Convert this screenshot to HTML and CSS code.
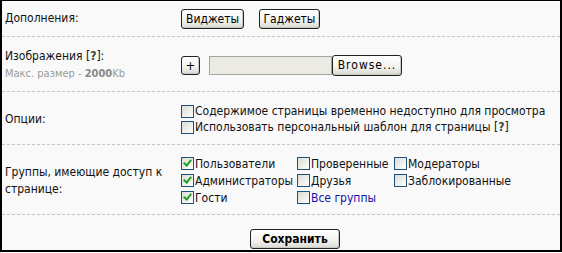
FILE: index.html
```html
<!DOCTYPE html>
<html lang="ru">
<head>
  <meta charset="UTF-8">
  <title>Настройки страницы</title>
  <link rel="stylesheet" href="styles.css">
</head>
<body>
  <div class="panel">
    <div class="row row-addons">
      <div class="label">Дополнения:</div>
      <div class="field">
        <button class="btn">Виджеты</button>
        <button class="btn">Гаджеты</button>
      </div>
    </div>

    <div class="row row-images">
      <div class="label">
        Изображения [<b class="help">?</b>]:
        <div class="hint">Макс. размер - <b>2000</b>Kb</div>
      </div>
      <div class="field upload">
        <button class="btn btn-plus">+</button>
        <span class="file-box"></span><button class="btn btn-browse">Browse...</button>
      </div>
    </div>

    <div class="row row-options">
      <div class="label">Опции:</div>
      <div class="field checks">
        <label class="check"><span class="box"></span>Содержимое страницы временно недоступно для просмотра</label>
        <label class="check"><span class="box"></span>Использовать персональный шаблон для страницы [<b class="help">?</b>]</label>
      </div>
    </div>

    <div class="row row-groups">
      <div class="label">Группы, имеющие доступ к странице:</div>
      <div class="field groups">
        <label class="check"><span class="box on"></span>Пользователи</label>
        <label class="check"><span class="box"></span>Проверенные</label>
        <label class="check"><span class="box"></span>Модераторы</label>
        <label class="check"><span class="box on"></span>Администраторы</label>
        <label class="check"><span class="box"></span>Друзья</label>
        <label class="check"><span class="box"></span>Заблокированные</label>
        <label class="check"><span class="box on"></span>Гости</label>
        <label class="check all"><span class="box"></span>Все группы</label>
      </div>
    </div>

    <div class="row-save">
      <button class="btn btn-save">Сохранить</button>
    </div>
  </div>
</body>
</html>
```

FILE: styles.css
```css
body {
  margin: 0;
  font-family: 'DejaVu Sans Condensed', 'DejaVu Sans', sans-serif;
  font-size: 12px;
  color: #111;
  background: #fff;
}

.panel {
  width: 558px;
  height: 249px;
  background: #f9f9f9;
  border-top: 1px solid #000;
  border-left: 2px solid #000;
  border-right: 2px solid #000;
  border-bottom: 2px solid #000;
}

.row {
  display: grid;
  grid-template-columns: 179px 1fr;
  align-items: center;
  border-bottom: 1px dashed #c4c4c4;
}

.label {
  padding-left: 3px;
  line-height: 17px;
}

.row-addons { height: 35px; }
.row-images { height: 54px; padding-top: 2px; height: 52px; }
.row-options { height: 52px; padding-top: 2px; height: 50px; }
.row-groups { height: 69px; padding-top: 2px; height: 67px; }

.row-groups .label {
  width: 170px;
  padding-top: 1px;
}

.help {
  color: #444;
}

.hint {
  font-size: 11px;
  color: #999;
  line-height: 17px;
}

.hint b {
  color: #888;
}

.btn {
  font-family: inherit;
  font-size: 12px;
  color: #000;
  height: 20px;
  padding: 0 4px;
  border: 1px solid #222;
  border-radius: 3px;
  background: linear-gradient(#ffffff, #f2f2ee 60%, #d8d8d2);
  box-shadow: inset -1px -1px 0 #c8c8c0;
}

.row-addons .btn + .btn {
  margin-left: 11px;
}

.upload {
  display: flex;
  align-items: center;
}

.btn-plus {
  width: 19px;
  height: 19px;
  padding: 0;
  margin-right: 9px;
  font-size: 13px;
  line-height: 15px;
}

.file-box {
  width: 121px;
  height: 17px;
  border: 1px solid #a4a4a4;
  background: #ebebe4;
}

.btn-browse {
  width: 70px;
  height: 21px;
  letter-spacing: 1px;
  padding: 0;
}

.check {
  display: flex;
  align-items: center;
  line-height: 16px;
  white-space: nowrap;
}

.box {
  width: 11px;
  height: 11px;
  border: 1px solid #1c5180;
  background: linear-gradient(135deg, #dcdcd6, #f4f4f0 70%, #fff);
  margin-right: 1px;
  flex: none;
  position: relative;
}

.box.on::after {
  content: "";
  position: absolute;
  left: 3px;
  top: 0px;
  width: 3px;
  height: 6px;
  border: solid #21a121;
  border-width: 0 2px 2px 0;
  transform: rotate(40deg);
}

.groups {
  display: grid;
  grid-template-columns: 116px 97px auto;
  row-gap: 1px;
}

.all {
  color: #1111aa;
}

.row-save {
  display: flex;
  justify-content: center;
  padding-top: 14px;
  padding-left: 28px;
}

.btn-save {
  font-weight: bold;
  width: 90px;
  height: 20px;
}
```
